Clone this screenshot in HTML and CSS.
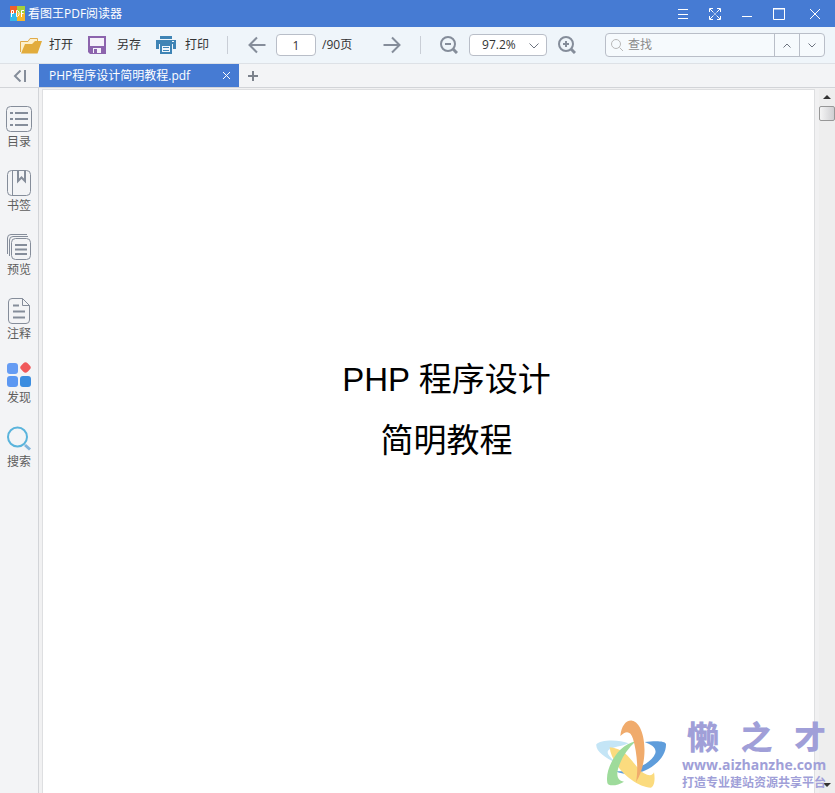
FILE: index.html
```html
<!DOCTYPE html>
<html lang="zh-CN">
<head>
<meta charset="utf-8">
<title>看图王PDF阅读器</title>
<link rel="stylesheet" href="styles.css">
</head>
<body>
<header class="titlebar">
  <svg class="app-logo" width="15" height="15" viewBox="0 0 15 15" aria-hidden="true">
    <path fill="#f0602c" d="M0 0h7v7H0z"/><path fill="#a5cf3b" d="M7 0h8v8H7z"/><path fill="#35b8ea" d="M0 7h7v8H0z"/><path fill="#f6b62b" d="M7 7h8v8H7z"/>
    <path fill="none" stroke="#fff" d="M1.500 11V4.500h2v3h-2M6.500 4.500v6h1l1.500-1.500V6L7.500 4.500zM11.500 11V4.500H14M11.500 7.500h2"/>
  </svg>
  <h1 class="app-name">看图王PDF阅读器</h1>
  <div class="window-controls">
    <button class="window-button" aria-label="菜单"><svg width="14" height="14" viewBox="0 0 14 14"><path d="M2 2.500h10M2 7.500h10M2 11.500h10"/></svg></button>
    <button class="window-button" aria-label="全屏"><svg width="14" height="14" viewBox="0 0 14 14"><path d="M1.500 5V1.500H5M9 1.500h3.500V5M12.500 9v3.500H9M5 12.500H1.500V9M2 2l3.500 3.500M12 2L8.500 5.500M12 12L8.500 8.500M2 12l3.500-3.500M6 7h2"/></svg></button>
    <button class="window-button" aria-label="最小化"><svg width="14" height="14" viewBox="0 0 14 14"><path d="M2 9.500h10"/></svg></button>
    <button class="window-button" aria-label="最大化"><svg width="14" height="14" viewBox="0 0 14 14"><path d="M1.500 2v10.500h11V2M1 2h12"/><path d="M1 1.500h12"/></svg></button>
    <button class="window-button window-close" aria-label="关闭"><svg width="14" height="14" viewBox="0 0 14 14"><path d="M2 2l10 10M12 2L2 12"/></svg></button>
  </div>
</header>

<nav class="toolbar" aria-label="工具栏">
  <button class="tool">
    <svg width="22" height="18" viewBox="0 0 22 18"><path fill="#fdf0cc" stroke="#e0ab4a" d="M.5 16V5.500H8l2-3h7.500V8"/><path fill="#e2ac3c" d="M1 17.500L5 8h7l3-3h7l-4.500 12.500z"/></svg>
    <span>打开</span>
  </button>
  <button class="tool tool-save">
    <svg width="18" height="18" viewBox="0 0 18 18"><path fill="#8c64ad" d="M0 0h18v18H2l-2-2z"/><path fill="#f4f2fa" d="M2 2h14v8H2zM5 12h8v5H5z"/><path fill="#8c64ad" d="M6 13h3v4H6z"/></svg>
    <span>另存</span>
  </button>
  <button class="tool tool-print">
    <svg width="20" height="18" viewBox="0 0 20 18"><path fill="#3f84b5" d="M4 0h12v3H4zM0 4h20v9h-3V8H3v5H0z"/><path fill="#eef6fb" stroke="#3f84b5" stroke-width="2" d="M5 9h10v8H5z"/><path stroke="#3f84b5" d="M7 11.500h6M7 14.500h6"/><path fill="#eef6fb" d="M16 5h2v1h-2z"/></svg>
    <span>打印</span>
  </button>
  <span class="divider"></span>
  <button class="icon-button prev" aria-label="上一页"><svg width="18" height="18" viewBox="0 0 18 18"><path d="M17.500 9H1.500M9 1.500L1.500 9 9 16.500"/></svg></button>
  <input class="page-input" aria-label="页码" value="1">
  <span class="page-total">/90页</span>
  <button class="icon-button next" aria-label="下一页"><svg width="18" height="18" viewBox="0 0 18 18"><path d="M.5 9h16M9 1.500L16.500 9 9 16.500"/></svg></button>
  <span class="divider"></span>
  <button class="icon-button zoom-out" aria-label="缩小"><svg width="18" height="18" viewBox="0 0 18 18"><circle cx="8" cy="8" r="7"/><path d="M5 8h6"/><path class="handle" d="M13 13l4 4"/></svg></button>
  <span class="zoom-field">
    <select class="zoom-select" aria-label="缩放比例"><option>97.2%</option></select>
    <svg class="chevron" width="10" height="6" viewBox="0 0 10 6"><path d="M.5.5L5 5 9.500.5"/></svg>
  </span>
  <button class="icon-button zoom-in" aria-label="放大"><svg width="18" height="18" viewBox="0 0 18 18"><circle cx="8" cy="8" r="7"/><path d="M5 8h6M8 5v6"/><path class="handle" d="M13 13l4 4"/></svg></button>
  <form class="search">
    <svg class="search-icon" width="12" height="12" viewBox="0 0 12 12"><circle cx="5" cy="5" r="4.500"/><path d="M8.500 8.500L12 12"/></svg>
    <input class="search-input" aria-label="查找" placeholder="查找">
    <button type="button" class="search-step" aria-label="查找上一个"><svg width="8" height="5" viewBox="0 0 8 5"><path d="M.5 4.500L4 1l3.500 3.500"/></svg></button>
    <button type="button" class="search-step" aria-label="查找下一个"><svg width="8" height="5" viewBox="0 0 8 5"><path d="M.5.5L4 4 7.500.5"/></svg></button>
  </form>
</nav>

<div class="tabstrip">
  <button class="collapse" aria-label="收起侧栏"><svg width="14" height="12" viewBox="0 0 14 12"><path d="M7.500.5L2 6l5.500 5.500M12 0v12"/></svg></button>
  <div class="tab">
    <span class="tab-title">PHP程序设计简明教程.pdf</span>
    <button class="tab-close" aria-label="关闭标签"><svg width="7" height="7" viewBox="0 0 7 7"><path d="M0 0l7 7M7 0L0 7"/></svg></button>
  </div>
  <button class="tab-add" aria-label="新建标签"><svg width="10" height="10" viewBox="0 0 10 10"><path d="M0 5h10M5 0v10"/></svg></button>
</div>

<div class="workspace">
  <aside class="sidebar">
    <button class="side-item">
      <svg width="26" height="26" viewBox="0 0 26 26"><rect x=".5" y=".5" width="25" height="25" rx="4"/><path class="bold" d="M9 7h13M9 13h13M9 19h13M4 7h3M4 13h3M4 19h3"/></svg>
      <span>目录</span>
    </button>
    <button class="side-item">
      <svg width="26" height="26" viewBox="0 0 26 26"><rect x="1.500" y=".5" width="23" height="25" rx="4"/><path d="M6.500 1v24"/><path class="bold" d="M12 1v10l3.500-3.500L19 11V1"/></svg>
      <span>书签</span>
    </button>
    <button class="side-item">
      <svg width="26" height="26" viewBox="0 0 26 26"><path d="M1.500 20V4a3.500 3.500 0 0 1 3.500-3.500h16M3.500 22V6a3.500 3.500 0 0 1 3.500-3.500h15"/><rect x="5.500" y="4.500" width="19" height="21" rx="4"/><path class="bold" d="M9 11h12M9 15.500h12M9 20h12"/></svg>
      <span>预览</span>
    </button>
    <button class="side-item">
      <svg width="26" height="26" viewBox="0 0 26 26"><path d="M16.500.5H6A3.500 3.500 0 0 0 2.500 4v18A3.500 3.500 0 0 0 6 25.500h14a3.500 3.500 0 0 0 3.500-3.500V7.500zM16.500.5v7h7"/><path class="bold" d="M7 7.500h6M7 13.500h12M7 19.500h12"/></svg>
      <span>注释</span>
    </button>
    <button class="side-item">
      <svg width="26" height="26" viewBox="0 0 26 26"><g stroke="none"><rect fill="#669cf3" x="1" y="1" width="11" height="11" rx="3"/><rect fill="#f0595b" x="15" y="1" width="9" height="9" rx="3" transform="rotate(45 19.500 5.500)"/><rect fill="#5c98f2" x="1" y="14" width="11" height="11" rx="3"/><rect fill="#3b8de0" x="14" y="14" width="11" height="11" rx="3"/></g></svg>
      <span>发现</span>
    </button>
    <button class="side-item">
      <svg width="26" height="26" viewBox="0 0 26 26"><circle class="lens" cx="11.500" cy="11" r="9.500"/><path class="lens-handle" d="M19 19l5 4.500"/></svg>
      <span>搜索</span>
    </button>
  </aside>
  <main class="viewer">
    <article class="page">
      <h2 class="doc-title">PHP 程序设计<br>简明教程</h2>
    </article>
    <div class="scrollbar" aria-hidden="true">
      <span class="scroll-up"></span>
      <span class="scroll-thumb"></span>
      <span class="scroll-down"></span>
    </div>
  </main>
  <div class="watermark">
    <svg width="72" height="72" viewBox="18 11 216 216" aria-hidden="true">
      <path fill="#c4e5f6" d="M116 84C90 72 30 72 19 87c-3 20 25 40 60 56C62 128 46 112 56 104c12-10 40-10 60-20z"/>
      <path fill="#5f9ddb" d="M164 80c30-4 62-4 64 6 2 56-86 112-152 82 52 2 108-22 120-54 4-16-10-26-32-34z"/>
      <path fill="#fbdb7e" d="M59 96c5 55 75 120 124 121 12-6 12-30 9-46-6 16-30 8-49-14C120 131 104 99 59 96z"/>
      <path fill="#9edb9b" d="M137 78C84 88 44 160 52 202c2 12 30 10 50-3-22-2-24-24-15-47 10-28 26-52 50-74z"/>
      <path fill="#f0ab6c" d="M91 62C94 32 108 14 126 16c40 6 54 120 12 184 8-40 2-92-9-130-7-24-22-25-38-8z"/>
    </svg>
    <div class="watermark-text">
      <strong class="watermark-name"><span>懒</span><span>之</span><span>才</span></strong>
      <span class="watermark-url">www.aizhanzhe.com</span>
      <span class="watermark-slogan">打造专业建站资源共享平台</span>
    </div>
  </div>
</div>
</body>
</html>
```
FILE: styles.css
```css
* { box-sizing: border-box; }

body {
  margin: 0;
  height: 100vh;
  display: flex;
  flex-direction: column;
  overflow: hidden;
  background: #f3f4f6;
  color: #333;
  font: 12px/16px "Open Sans", "Noto Sans CJK SC", sans-serif;
}

button, input, select { font: inherit; color: inherit; }

button {
  display: flex;
  align-items: center;
  justify-content: center;
  padding: 0;
  border: 0;
  background: none;
}

svg { display: block; flex: none; fill: none; }

/* Title bar */
.titlebar {
  display: flex;
  align-items: center;
  flex: none;
  height: 27px;
  padding-left: 10px;
  background: #467bd3;
  color: #fff;
}
.app-name { margin: 0 0 0 3px; font-size: 12px; font-weight: 400; }
.window-controls { display: flex; margin-left: auto; padding-right: 4px; }
.window-button { width: 32px; height: 27px; stroke: #fff; }
.window-close { margin-left: 4px; }

/* Toolbar */
.toolbar {
  display: flex;
  align-items: center;
  flex: none;
  height: 36px;
  padding: 0 10px 0 20px;
  background: #eff5fa;
}
.tool { gap: 7px; margin-right: 15px; white-space: nowrap; }
.tool-save { gap: 11px; }
.tool-print { gap: 9px; }
.divider { width: 1px; height: 18px; margin-left: 3px; background: #c9ced6; }
.icon-button { stroke: #858d9a; stroke-width: 2; }
.handle { stroke-width: 3; }
.prev { margin: 0 10px 0 20px; }
.page-input {
  width: 40px;
  height: 22px;
  padding: 0;
  border: 1px solid #b9bec8;
  border-radius: 4px;
  background: #fff;
  text-align: center;
}
.page-total { width: 34px; margin-left: 6px; white-space: nowrap; }
.next { margin: 0 16px 0 27px; }
.zoom-out { margin: 0 11px 0 19px; }
.zoom-in { margin-left: 11px; }
.zoom-field { position: relative; flex: none; }
.zoom-select {
  display: block;
  width: 78px;
  height: 22px;
  padding: 0 0 0 12px;
  appearance: none;
  border: 1px solid #b9bec8;
  border-radius: 4px;
  background: #fff;
}
.chevron { position: absolute; top: 9px; right: 8px; stroke: #6d7480; pointer-events: none; }
.search {
  display: flex;
  align-items: center;
  flex: 1;
  min-width: 0;
  height: 24px;
  margin-left: 29px;
  border: 1px solid #b9bec8;
  border-radius: 4px;
  background: #f6fafd;
}
.search-icon { margin: 0 5px; stroke: #b8b8b8; }
.search-input { flex: 1; min-width: 0; padding: 0; border: 0; background: none; }
.search-input::placeholder { color: #8b8b8b; opacity: 1; }
.search-step {
  width: 25px;
  height: 22px;
  border-left: 1px solid #b9bec8;
  stroke: #6d7480;
}

/* Tabs */
.tabstrip {
  display: flex;
  flex: none;
  height: 25px;
  border-top: 1px solid #dde1e6;
  border-bottom: 1px solid #d2d4d8;
  background: #f3f4f6;
}
.collapse { width: 39px; stroke: #858d9a; stroke-width: 2; }
.tab {
  display: flex;
  align-items: center;
  justify-content: space-between;
  width: 200px;
  padding: 0 9px 0 10px;
  background: #467bd3;
  color: #fff;
}
.tab-title { white-space: nowrap; }
.tab-close { stroke: #fff; }
.tab-add { padding: 0 9px; stroke: #7c828c; stroke-width: 2; }

/* Workspace */
.workspace { position: relative; display: flex; flex: 1; min-height: 0; }
.sidebar {
  display: flex;
  flex-direction: column;
  gap: 20px;
  width: 39px;
  padding-top: 18px;
  border-right: 1px solid #d2d4d8;
}
.side-item {
  flex-direction: column;
  gap: 2px;
  height: 44px;
  color: #5d5d5d;
  stroke: #858d9a;
}
.bold { stroke-width: 2; }
.lens { stroke: #5ab4dc; stroke-width: 2; }
.lens-handle { stroke: #7fb4dc; stroke-width: 3; }
.viewer {
  display: flex;
  flex: 1;
  min-width: 0;
  padding: 1px 0 0 3px;
  background: #f1f1f2;
}
.page {
  flex: 1;
  border: 1px solid #dedfe1;
  border-bottom: 0;
  background: #fff;
}
.doc-title {
  margin: 259px 0 0;
  padding-left: 36px;
  color: #000;
  font: 400 33px/61px "Liberation Sans", "Noto Sans CJK SC", sans-serif;
  text-align: center;
}
.scrollbar {
  display: flex;
  flex-direction: column;
  align-items: center;
  width: 16px;
  margin-left: 4px;
  padding: 6px 0;
  background: #eee;
}
.scroll-up, .scroll-down { border: 4px solid transparent; }
.scroll-up { border-top: 0; border-bottom-color: #333; }
.scroll-down { margin-top: auto; border-bottom: 0; border-top-color: #333; }
.scroll-thumb {
  width: 16px;
  height: 15px;
  margin-top: 7px;
  border: 1px solid #979797;
  border-radius: 2px;
  background: linear-gradient(to right, #f5f5f5, #cfcfd2);
}

/* Watermark over the lower corner */
.watermark {
  position: absolute;
  right: 9px;
  bottom: 2px;
  display: flex;
  align-items: flex-end;
  gap: 14px;
  color: #a09fd8;
  font-weight: 700;
  pointer-events: none;
}
.watermark-text { display: flex; flex-direction: column; width: 144px; white-space: nowrap; }
.watermark-name {
  display: flex;
  justify-content: space-between;
  padding-left: 5px;
  font-size: 32px;
  font-weight: 900;
  line-height: 36px;
}
.watermark-url { font-size: 14px; line-height: 20px; }
.watermark-slogan { line-height: 16px; }
```
